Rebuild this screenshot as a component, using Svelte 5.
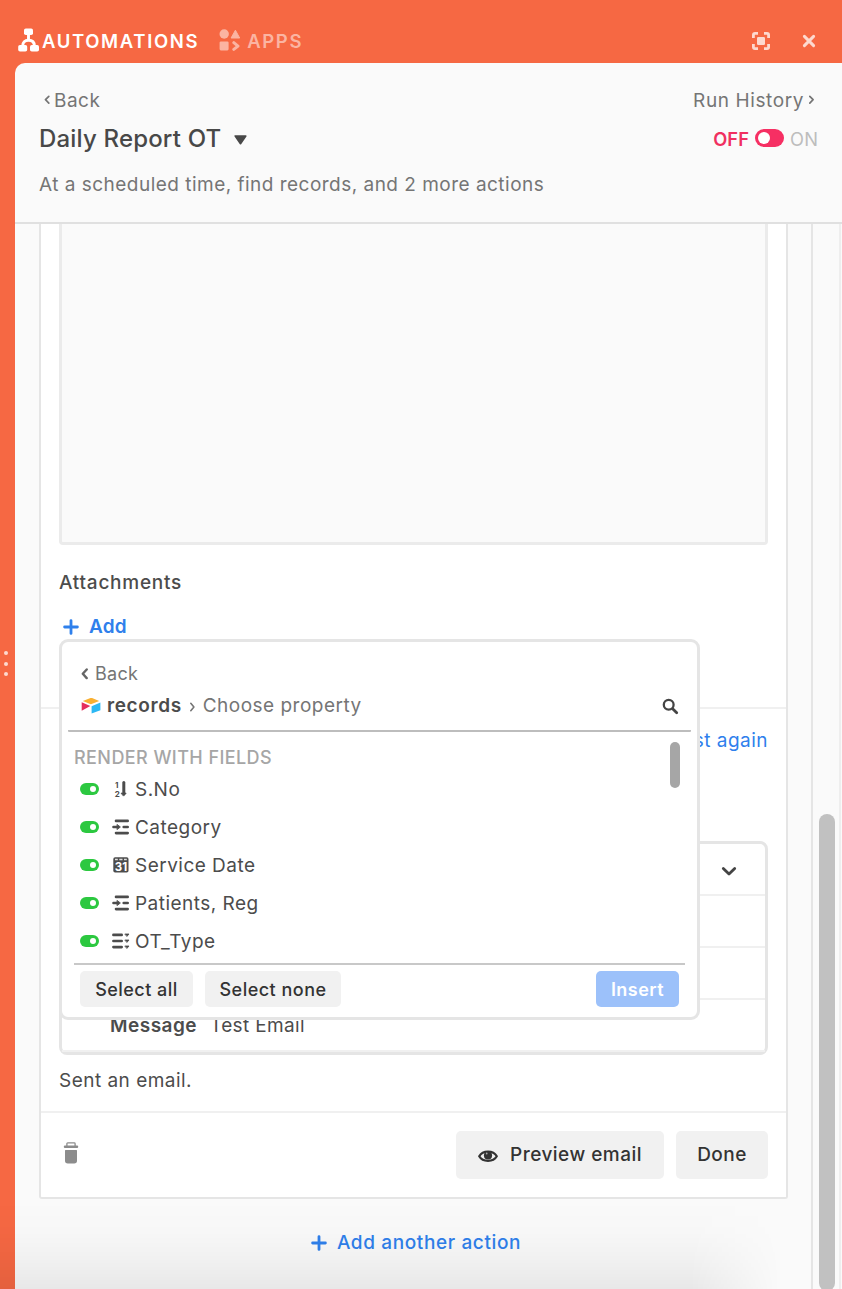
<script>
  const fields = [
    { name: 'S.No', icon: 'sort' },
    { name: 'Category', icon: 'lookup' },
    { name: 'Service Date', icon: 'date' },
    { name: 'Patients, Reg', icon: 'lookup' },
    { name: 'OT_Type', icon: 'multi' }
  ];
</script>

{#snippet plus()}
  <svg class="plus" width="16" height="16" viewBox="0 0 16 16"><path d="M8 1.6v12.8M1.6 8h12.8" stroke="#2f80ec" stroke-width="2.8" stroke-linecap="round" /></svg>
{/snippet}

<div class="app">
  <header class="topbar">
    <div class="tab active">
      <svg width="22" height="24" viewBox="0 0 22 24" fill="#fff">
        <rect x="6" y="0.5" width="9" height="6.600" rx="1.800" />
        <path d="M10.500 6v6M4.700 18c0-3.800 2-5.700 5.800-5.700s5.900 1.900 5.900 5.700" fill="none" stroke="#fff" stroke-width="2.900" />
        <rect x="0.200" y="16.900" width="9" height="6.600" rx="1.800" />
        <rect x="12" y="16.900" width="9" height="6.600" rx="1.800" />
      </svg>
      <span class="t-auto">AUTOMATIONS</span>
    </div>
    <div class="tab">
      <svg width="22" height="22" viewBox="0 0 22 22" fill="#fbb4a2">
        <circle cx="5.200" cy="5" r="4.700" />
        <path d="M16.400 1.200l4.300 7.800h-8.600z" stroke="#fbb4a2" stroke-width="1" stroke-linejoin="round" />
        <rect x="0.600" y="12.400" width="9" height="9" rx="1.300" />
        <path d="M14.800 13.600l4.200 3.500-4.200 3.300" fill="none" stroke="#fbb4a2" stroke-width="3" stroke-linecap="round" stroke-linejoin="round" />
      </svg>
      <span class="t-apps">APPS</span>
    </div>
    <div class="window">
      <svg width="20" height="20" viewBox="0 0 20 20" fill="none" stroke="#fdd9cf" stroke-width="2.800">
        <path d="M2.400 7V4q0-1.600 1.600-1.600h3M13 2.400h3q1.600 0 1.600 1.600v3M17.600 13v3q0 1.600-1.600 1.600h-3M7 17.600H4q-1.600 0-1.600-1.600v-3" />
        <rect x="6" y="6" width="8" height="8" rx="1.200" fill="#fdd9cf" stroke="none" />
      </svg>
      <svg width="14" height="14" viewBox="0 0 14 14"><path d="M2.400 2.400l9.200 9.200M11.600 2.400l-9.200 9.200" stroke="#fdd9cf" stroke-width="3" stroke-linecap="round" /></svg>
    </div>
  </header>

  <div class="main">
    <div class="handle"><i></i><i></i><i></i></div>
    <section class="panel">
      <div class="head">
        <div class="row nav">
          <span class="link">
            <svg width="7" height="10" viewBox="0 0 7 10"><path d="M5.800 1.300L2.500 4.700l3.300 3.400" fill="none" stroke="#757575" stroke-width="1.700" stroke-linecap="round" stroke-linejoin="round" /></svg>
            <span class="t-back">Back</span>
          </span>
          <span class="link">
            <span class="t-run">Run History</span>
            <svg width="7" height="10" viewBox="0 0 7 10"><path d="M1.800 1.300L5.100 4.700 1.800 8.100" fill="none" stroke="#757575" stroke-width="1.700" stroke-linecap="round" stroke-linejoin="round" /></svg>
          </span>
        </div>
        <div class="row title">
          <h1>
            <span class="t-title">Daily Report OT</span>
            <svg width="13" height="10" viewBox="0 0 13 10"><path d="M1.200 1h10.600L6.500 8.700z" fill="#484848" stroke="#484848" stroke-width="1.600" stroke-linejoin="round" /></svg>
          </h1>
          <div class="state">
            <b>OFF</b>
            <span class="switch"></span>
            <span class="on">ON</span>
          </div>
        </div>
        <p class="desc">At a scheduled time, find records, and 2 more actions</p>
      </div>

      <div class="body">
        <div class="content">
          <div class="card">
            <div class="setup">
              <div class="textarea"></div>
              <div class="label">Attachments</div>
              <div class="add">{@render plus()}<span>Add</span></div>
            </div>

            <div class="results">
              <div class="again">Test again</div>
              <div class="table">
                <div class="tr first">
                  <svg width="16" height="11" viewBox="0 0 16 11"><path d="M2.300 2.400L8 8l5.700-5.600" fill="none" stroke="#444" stroke-width="2.800" stroke-linecap="round" stroke-linejoin="round" /></svg>
                </div>
                <div class="tr"></div>
                <div class="tr"></div>
                <div class="tr message"><b>Message</b><span>Test Email</span></div>
              </div>
              <div class="sent">Sent an email.</div>
            </div>

            <div class="footer">
              <svg width="16" height="22" viewBox="0 0 16 22" fill="#8c8c8c">
                <path d="M3.900 4V1.700q0-.8.800-.8h6.600q.8 0 .8.800V4" fill="none" stroke="#8c8c8c" stroke-width="1.300" />
                <rect x="0.800" y="3.400" width="14.400" height="2.700" rx="1.100" />
                <path d="M2 8.600q0-.6.600-.6h10.800q.6 0 .6.600v10.200q0 2.700-2.800 2.700H4.800q-2.800 0-2.800-2.700z" />
              </svg>
              <div class="actions">
                <button class="preview">
                  <svg width="20" height="14" viewBox="0 0 20 14">
                    <path d="M1.200 7.200C4.800 1 15.200 1 18.800 7.200 15.200 13.400 4.800 13.400 1.200 7.200z" fill="none" stroke="#333" stroke-width="2.200" stroke-linejoin="round" />
                    <circle cx="10" cy="6.500" r="4.100" fill="#333" /><circle cx="8.700" cy="4.500" r=".9" fill="#aaa" />
                  </svg>
                  <span>Preview email</span>
                </button>
                <button class="done">Done</button>
              </div>
            </div>

            <div class="popup">
              <div class="pback">
                <svg width="9" height="12" viewBox="0 0 9 12"><path d="M6.700 1.500L2.800 5.800l3.900 4.300" fill="none" stroke="#666" stroke-width="2.400" stroke-linecap="round" stroke-linejoin="round" /></svg>
                <span>Back</span>
              </div>
              <div class="crumb">
                <svg width="20" height="17" viewBox="0 0 20 17">
                  <path d="M1.800 4L9.500 1.100q.8-.3 1.600 0L18.200 4 10.600 7q-.7.300-1.400 0z" fill="#f9b032" />
                  <path d="M10.600 9.200L19.400 5.600v7.700l-8.800 3.200z" fill="#2cb8f4" />
                  <path d="M.7 5.300l8.600 3.800L.7 13.800z" fill="#e52e5c" />
                </svg>
                <b>records</b>
                <svg class="sep" width="7" height="10" viewBox="0 0 7 10"><path d="M1.800 1.300L4.900 5 1.800 8.700" fill="none" stroke="#757575" stroke-width="1.600" stroke-linecap="round" stroke-linejoin="round" /></svg>
                <span class="choose">Choose property</span>
                <svg class="search" width="17" height="17" viewBox="0 0 17 17" fill="none" stroke="#444"><circle cx="6.700" cy="6.700" r="4.900" stroke-width="2.300" /><path d="M10.900 10.900l3.800 3.800" stroke-width="2.800" stroke-linecap="round" /></svg>
              </div>
              <div class="list">
                <div class="thumb"></div>
                <div class="caption">RENDER WITH FIELDS</div>
                {#each fields as field}
                  <div class="field">
                    <span class="toggle"></span>
                    <svg width="18" height="18" viewBox="0 0 18 18" fill="none" stroke="#4c4c4c" stroke-width="2.600" stroke-linecap="round">
                      {#if field.icon === 'sort'}
                        <text x="3" y="7.800">1</text><text x="2.800" y="16.700">2</text>
                        <path d="M11.800 2.500v11" stroke-width="3" /><path d="M9.500 13.200h4.600l-2.300 2.600z" fill="#4c4c4c" stroke-width="1" stroke-linejoin="round" />
                      {:else if field.icon === 'lookup'}
                        <path d="M4 2.900h11.700M11.700 9h4M4 15.100h11.700" />
                        <path d="M1.400 9h4.500" stroke-width="2.400" /><path d="M5.300 6.600L8.400 9l-3.100 2.400z" fill="#4c4c4c" stroke-width=".8" stroke-linejoin="round" />
                      {:else if field.icon === 'date'}
                        <rect x="1.300" y="1.200" width="15.200" height="15.400" rx="1.800" fill="#4c4c4c" stroke="none" />
                        <path d="M3 3.500h2.800M7.300 3.500h3.200M12 3.500h2.800" stroke="#ddd" stroke-width="1.300" stroke-linecap="butt" />
                        <text class="day" x="8.900" y="14.500">31</text>
                      {:else}
                        <path d="M1.400 2.900h8.300M1.400 9h8.300M1.400 15.100h8.300" />
                        <path d="M13.200 2h3.800l-1.900 2.200zM13.200 8h3.800l-1.900 2.200zM13.200 14h3.800l-1.900 2.200z" fill="#4c4c4c" stroke-width=".8" />
                      {/if}
                    </svg>
                    <span>{field.name}</span>
                  </div>
                {/each}
              </div>
              <div class="pfoot">
                <button class="all">Select all</button>
                <button class="none">Select none</button>
                <button class="insert">Insert</button>
              </div>
            </div>
          </div>
          <div class="another">{@render plus()}<span>Add another action</span></div>
        </div>
        <div class="scroll"><div class="bar"></div></div>
      </div>
    </section>
  </div>
  <div class="shade"></div>
</div>

<style>
  :global(body) { margin: 0; background: #f66843; }
  .app, .app :global(*) { box-sizing: border-box; }
  .app { position: relative; width: 842px; height: 1289px; overflow: hidden; display: flex; flex-direction: column; background: #f66843; color: #4c4c4c; font: 400 19px/24px Inter, "Liberation Sans", sans-serif; white-space: nowrap; letter-spacing: .48px; }
  svg { display: block; flex: none; }
  button { border: 0; border-radius: 5px; background: #f1f1f1; color: #333; font: inherit; font-weight: 500; letter-spacing: inherit; padding: 0; }
  .topbar { height: 63px; padding: 18px 26px 0 18px; display: flex; align-items: center; flex: none; }
  .tab { display: flex; align-items: center; gap: 2px; font-weight: 600; font-size: 18.500px; color: #fbb4a2; }
  .tab.active { color: #fff; margin-right: 20px; }
  .tab:not(.active) { gap: 6px; }
  .tab svg { margin-top: -2px; }
  .tab span { padding-top: 1px; }
  .t-auto { letter-spacing: 1.640px; }
  .t-apps { letter-spacing: 1.640px; }
  .window { margin-left: auto; display: flex; align-items: center; gap: 31px; }
  .main { flex: 1; min-height: 0; display: flex; }
  .handle { width: 15px; padding: 588px 0 0 4px; display: flex; flex-direction: column; gap: 6.500px; }
  .handle i { width: 4px; height: 4px; border-radius: 50%; background: #fdd9cf; }
  .panel { flex: 1; display: flex; flex-direction: column; border-radius: 10px 0 0 0; overflow: hidden; background: #fafafa; }
  .head { height: 161px; flex: none; border-bottom: 2px solid #e0e0e0; padding: 26px 24px 0 24px; color: #757575; }
  .row { display: flex; justify-content: space-between; align-items: center; }
  .nav { height: 24px; padding: 0 3px 0 4px; }
  .link { display: flex; align-items: center; gap: 4px; }
  .link svg { margin-top: -2px; }
  .t-run { letter-spacing: .6px; }
  .title { height: 32px; margin-top: 10px; }
  h1 { margin: 0; display: flex; align-items: center; gap: 13px; font-size: 24px; font-weight: 500; color: #484848; }
  h1 svg { margin-top: 2px; }
  .t-title { letter-spacing: .18px; }
  .state { display: flex; align-items: center; gap: 6px; font-size: 18.300px; letter-spacing: .1px; }
  .state b { color: #f0305f; font-weight: 600; }
  .on { color: #bdbdbd; }
  .switch { width: 29px; height: 18px; border-radius: 9px; background: #f62f63; padding: 3px; display: flex; margin-top: -2px; }
  .switch::after { content: ''; width: 12px; height: 12px; border-radius: 50%; background: #fff; }
  .desc { margin: 18px 0 0; }
  .body { flex: 1; min-height: 0; display: flex; }
  .content { width: 798px; border-right: 2px solid #e5e5e5; padding: 0 23px 0 24px; }
  .card { position: relative; height: 975px; border: 2px solid #e5e5e5; border-top: 0; border-radius: 0 0 3px 3px; background: #fff; }
  .setup { height: 485px; border-bottom: 2px solid #f0f0f0; padding: 0 18px; }
  .textarea { height: 321px; border: 3px solid #ebebeb; border-top: 0; border-radius: 0 0 4px 4px; background: #fafafa; }
  .label { margin-top: 26px; font-weight: 500; letter-spacing: .76px; }
  .add { margin-top: 20px; display: flex; align-items: center; color: #2f80ec; font-weight: 600; padding-left: 4px; gap: 10px; letter-spacing: .2px; }
  .results { height: 404px; padding: 20px 18px 0; border-bottom: 2px solid #f0f0f0; }
  .again { color: #2f80ec; text-align: right; }
  .table { margin-top: 88px; height: 214px; border: 3px solid #e5e5e5; border-radius: 8px; }
  .tr { height: 52px; border-bottom: 2px solid #f0f0f0; }
  .first { display: flex; align-items: center; justify-content: flex-end; padding: 4px 28px 0 0; }
  .message { display: flex; padding: 14px 0 0 48px; gap: 13px; }
  .message b { font-weight: 600; }
  .message span { letter-spacing: .35px; }
  .sent { margin-top: 14px; }
  .footer { height: 84px; padding: 0 18px; display: flex; justify-content: space-between; align-items: center; }
  .footer > svg { margin-left: 4px; margin-top: -4px; }
  .actions { display: flex; gap: 12px; }
  .actions button { height: 48px; }
  .preview { width: 208px; display: flex; align-items: center; justify-content: center; gap: 12px; }
  .preview svg { margin-top: 1px; }
  .done { width: 92px; }
  .another { display: flex; justify-content: center; align-items: center; gap: 10px; margin-top: 32px; padding-left: 5px; color: #2f80ec; font-weight: 500; letter-spacing: .62px; }
  .scroll { width: 28px; border-right: 2px solid #eee; padding: 590px 0 0 6px; background: #fafafa; }
  .bar { width: 16px; height: 477px; border-radius: 8px; background: #c1c1c1; }
  .popup { position: absolute; left: 18px; top: 415px; width: 641px; height: 381px; border: 3px solid #e5e5e5; border-radius: 9px; background: #fff; padding: 20px 6px 0; display: flex; flex-direction: column; }
  .pback { height: 24px; display: flex; align-items: center; gap: 6px; padding-left: 12px; color: #757575; font-size: 18px; letter-spacing: .25px; }
  .crumb { height: 46px; border-bottom: 2px solid #bdbdbd; padding: 0 12px 5px 13px; display: flex; align-items: center; border-radius: 1px; }
  .crumb b { font-weight: 600; margin-left: 6px; letter-spacing: .62px; }
  .sep { margin: 2px 7px 0 7px; }
  .choose { color: #757575; letter-spacing: .48px; }
  .search { margin-left: auto; margin-top: 2px; }
  .list { position: relative; margin: 0 6px; height: 233px; border-bottom: 2px solid #c8c8c8; padding-top: 14px; }
  .caption { height: 25px; font-size: 18px; font-weight: 500; color: #a6a6a6; letter-spacing: .42px; }
  .thumb { position: absolute; right: 5px; top: 10px; width: 10px; height: 46px; border-radius: 5px; background: #a6a6a6; }
  .field { height: 38px; display: flex; align-items: center; padding-left: 6px; }
  .toggle { width: 19px; height: 12px; border-radius: 6px; background: #2cc840; margin: -2px 14px 0 0; display: flex; justify-content: flex-end; padding: 3px; }
  .toggle::after { content: ''; width: 6px; height: 6px; border-radius: 50%; background: #fff; }
  .field svg { margin: -2px 5px 0 -1px; }
  .field text { font: 700 8px Inter; fill: #4c4c4c; stroke: none; letter-spacing: 0; }
  .field text.day { font-size: 11.500px; fill: #fff; text-anchor: middle; }
  .pfoot { display: flex; margin: 6px 12px 0; gap: 12px; font-size: 18px; }
  .pfoot button { height: 36px; padding-top: 1px; }
  .all { width: 113px; }
  .none { width: 136px; }
  button.insert { width: 83px; margin-left: auto; background: #9cc1fa; color: #fff; font-weight: 600; }
  .shade { position: absolute; left: 0; bottom: 0; width: 810px; height: 88px; pointer-events: none; background: linear-gradient(to bottom, transparent, rgba(0,0,0,.012) 35%, rgba(0,0,0,.035) 65%, rgba(0,0,0,.07)); mask-image: linear-gradient(to right, #000 690px, transparent 780px); }
</style>
